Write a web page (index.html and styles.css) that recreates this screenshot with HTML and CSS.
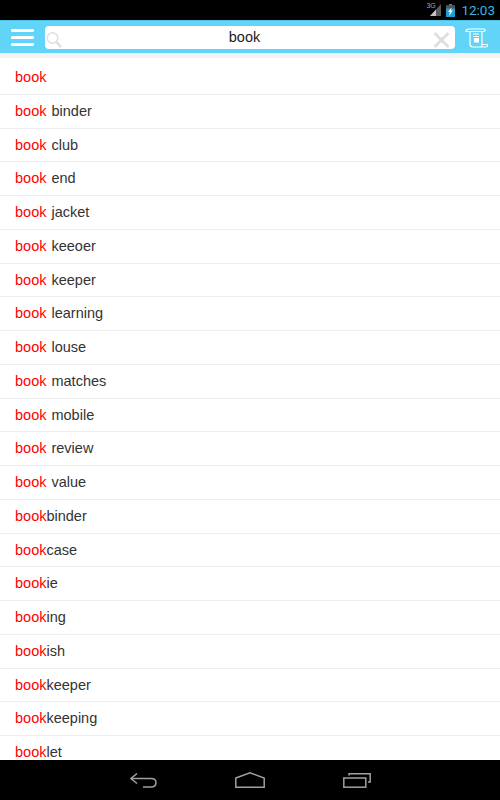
FILE: index.html
```html
<!DOCTYPE html>
<html lang="en">
<head>
    <meta charset="UTF-8">
    <meta name="viewport" content="width=device-width, initial-scale=1.0">
    <title>Dictionary Search</title>
    <link rel="stylesheet" href="styles.css">
</head>
<body>
    <div class="statusbar">
        <div class="signal">
            <span class="net">3G</span>
            <svg width="11" height="12" viewBox="0 0 11 12">
                <path d="M11 0v12H0z" fill="#5a5a5a"/>
                <path d="M6 5.500V12H0z" fill="#c4c4c4"/>
            </svg>
        </div>
        <svg class="battery" width="9" height="13" viewBox="0 0 9 13">
            <rect x="3" y="0" width="3" height="1.500" fill="#7a7a7a"/>
            <rect x="0" y="1.500" width="9" height="11.500" fill="#1f9fd0"/>
            <rect x="0" y="1.500" width="9" height="3" fill="#555"/>
            <path d="M5.500 3.500L2 8h2L3 12l4-5.500H5z" fill="#fff"/>
        </svg>
        <span class="clock">12:03</span>
    </div>

    <div class="toolbar">
        <div class="menu-icon"><span></span><span></span><span></span></div>
        <div class="searchbox">
            <svg class="search-icon" width="16" height="16" viewBox="0 0 16 16" fill="none" stroke="#dedede">
                <circle cx="6.500" cy="6" r="5.200" stroke-width="1.500"/>
                <path d="M10.500 10l4.500 5" stroke-width="2.500"/>
            </svg>
            <span class="query">book</span>
            <svg class="clear-icon" width="17" height="16" viewBox="0 0 17 16" fill="none" stroke="#dedede" stroke-width="2.800">
                <path d="M1.500 1l14 14M15.500 1l-14 14"/>
            </svg>
        </div>
        <svg class="scroll-icon" width="24" height="20" viewBox="0 0 24 20" fill="none" stroke="#fff" stroke-width="1.200">
            <path d="M1 3.500C1 1.500 2.500 1 4 1h15c1.500 0 1.500 2.500 0 2.500H1z"/>
            <path d="M5 3.500V16c0 2 1 3 3 3h7"/>
            <path d="M17 3.500V16.500h4.500c1.500 0 1.500 2.500-.5 2.500h-6c1.500 0 2-1 2-2.500"/>
            <path d="M8 6h6M8 8.500h6"/>
            <rect x="9" y="10" width="5" height="4.500" fill="#fff" stroke="none"/>
        </svg>
    </div>
    <div class="toolbar-shade"></div>

    <ul class="results">
        <li><em>book</em></li>
        <li><em>book</em> binder</li>
        <li><em>book</em> club</li>
        <li><em>book</em> end</li>
        <li><em>book</em> jacket</li>
        <li><em>book</em> keeoer</li>
        <li><em>book</em> keeper</li>
        <li><em>book</em> learning</li>
        <li><em>book</em> louse</li>
        <li><em>book</em> matches</li>
        <li><em>book</em> mobile</li>
        <li><em>book</em> review</li>
        <li><em>book</em> value</li>
        <li><em>book</em>binder</li>
        <li><em>book</em>case</li>
        <li><em>book</em>ie</li>
        <li><em>book</em>ing</li>
        <li><em>book</em>ish</li>
        <li><em>book</em>keeper</li>
        <li><em>book</em>keeping</li>
        <li><em>book</em>let</li>
    </ul>

    <div class="navbar">
        <svg width="27" height="15" viewBox="0 0 27 15" fill="none" stroke="#a0a0a0" stroke-width="1.500">
            <path d="M7 .5L1 5.500l6 5"/>
            <path d="M1 5.500h20c3.500 0 5 1.500 5 4s-1.500 4.500-5 4.500h-8"/>
        </svg>
        <svg width="30" height="16" viewBox="0 0 30 16" fill="none" stroke="#a0a0a0" stroke-width="1.500">
            <path d="M.8 6L15 .8 29.200 6v9.200H.8z"/>
        </svg>
        <svg width="28" height="15" viewBox="0 0 28 15" fill="none" stroke="#a0a0a0" stroke-width="1.500">
            <rect x=".8" y="5" width="22" height="9.200"/>
            <path d="M6 2.500V.8h21.200V9H25"/>
        </svg>
    </div>
</body>
</html>
```

FILE: styles.css
```css
html, body {
    margin: 0;
    padding: 0;
}
body {
    width: 500px;
    height: 800px;
    display: flex;
    flex-direction: column;
    overflow: hidden;
    font-family: "Liberation Sans", Arial, sans-serif;
    background: #fff;
}
.statusbar {
    height: 20px;
    flex: none;
    background: #000;
    display: flex;
    align-items: center;
    justify-content: flex-end;
    padding-right: 5px;
}
.signal {
    position: relative;
    display: flex;
    margin-right: 5px;
}
.net {
    position: absolute;
    left: -4px;
    top: -2px;
    font-size: 7px;
    color: #aaa;
}
.clock {
    color: #33b5e5;
    font-family: "Roboto", sans-serif;
    font-size: 13.5px;
    margin-left: 6px;
}
.toolbar {
    height: 32px;
    flex: none;
    background: #62d4f8;
    border-top: 1px solid #4fc3e8;
    display: flex;
    align-items: center;
    padding: 0 11px;
}
.menu-icon {
    width: 23px;
    display: flex;
    flex-direction: column;
    gap: 4px;
    margin-right: 11px;
}
.menu-icon span {
    height: 3px;
    background: #fff;
    border-radius: 1px;
}
.searchbox {
    width: 410px;
    height: 23px;
    background: #fff;
    border-radius: 4px;
    display: flex;
    align-items: center;
    justify-content: space-between;
    padding: 0 5px 0 1px;
    box-sizing: border-box;
    position: relative;
}
.search-icon {
    margin-top: 6px;
}
.clear-icon {
    margin-top: 5px;
}
.query {
    position: absolute;
    left: 0;
    right: 11px;
    text-align: center;
    font-size: 14.5px;
    color: #222;
    margin-top: -1px;
}
.scroll-icon {
    margin-left: 10px;
    margin-top: 2px;
}
.toolbar-shade {
    height: 5px;
    flex: none;
    background: #f4f2f4;
}
.results {
    list-style: none;
    margin: 0;
    padding: 3px 0 0;
    flex: 1;
    overflow: hidden;
}
.results li {
    height: 33.75px;
    box-sizing: border-box;
    line-height: 32px;
    padding-left: 15px;
    font-size: 14.5px;
    word-spacing: 1px;
    color: #333;
    border-bottom: 1px solid #eee;
}
.results em {
    font-style: normal;
    color: #f00;
}
.navbar {
    height: 40px;
    flex: none;
    background: #000;
    display: flex;
    align-items: center;
    justify-content: center;
    gap: 78px;
}
```
